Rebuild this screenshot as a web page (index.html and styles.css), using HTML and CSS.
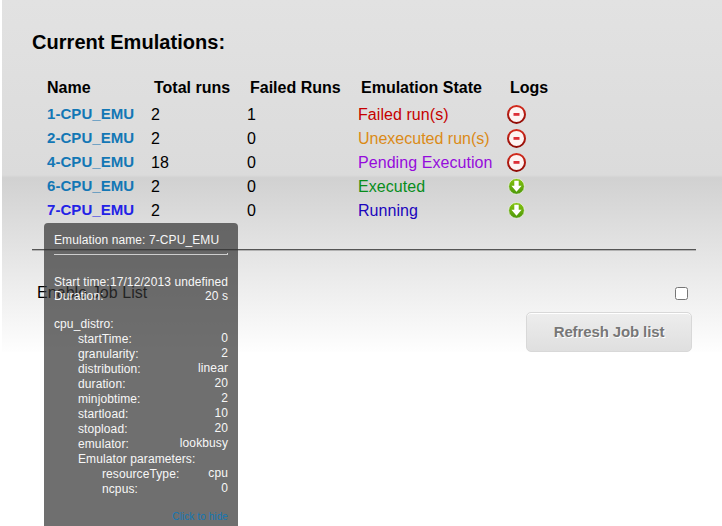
FILE: index.html
```
<!DOCTYPE html>
<html lang="en">
<head>
<meta charset="utf-8">
<title>Emulations</title>
<link rel="stylesheet" href="styles.css">
</head>
<body>
<svg class="defs" width="0" height="0" aria-hidden="true">
  <defs>
    <linearGradient id="red" x1="0" y1="0" x2="0" y2="1"><stop offset="0" stop-color="#d32a1c"/><stop offset="1" stop-color="#900b05"/></linearGradient>
    <linearGradient id="green" x1="0" y1="0" x2="0" y2="1"><stop offset="0" stop-color="#86c40f"/><stop offset="1" stop-color="#4c970a"/></linearGradient>
    <symbol id="minus" viewBox="0 0 20 20"><circle cx="10.5" cy="10.4" r="8.5" fill="#fdf4f3" stroke="url(#red)" stroke-width="2"/><path d="M7.5 9h6v2.8h-6z" fill="#dc2f37"/></symbol>
    <symbol id="down" viewBox="0 0 20 20"><circle cx="10.5" cy="10.4" r="7.9" fill="url(#green)" stroke="#edf2e8" stroke-width="0.8"/><path d="M8.3 4.8h4.4v5h2.9l-5.1 6-5.1-6h2.9z" fill="#fff"/></symbol>
  </defs>
</svg>
<main class="page">
  <h1 class="title">Current Emulations:</h1>
  <div class="table">
    <div class="row head"><span>Name</span><span>Total runs</span><span>Failed Runs</span><span>Emulation State</span><span>Logs</span></div>
    <div class="row"><a class="name">1-CPU_EMU</a><span>2</span><span>1</span><span class="failed">Failed run(s)</span><svg class="icon"><use href="#minus"/></svg></div>
    <div class="row"><a class="name">2-CPU_EMU</a><span>2</span><span>0</span><span class="unexecuted">Unexecuted run(s)</span><svg class="icon"><use href="#minus"/></svg></div>
    <div class="row"><a class="name">4-CPU_EMU</a><span>18</span><span>0</span><span class="pending">Pending Execution</span><svg class="icon"><use href="#minus"/></svg></div>
    <div class="row"><a class="name">6-CPU_EMU</a><span>2</span><span>0</span><span class="executed">Executed</span><svg class="icon"><use href="#down"/></svg></div>
    <div class="row"><a class="name active">7-CPU_EMU</a><span>2</span><span>0</span><span class="running">Running</span><svg class="icon"><use href="#down"/></svg></div>
  </div>
  <div class="rule"></div>
  <label class="enable"><span>Enable Job List</span><input class="check" type="checkbox"></label>
  <button class="refresh" type="button">Refresh Job list</button>
</main>
<aside class="popup">
  <div class="popup-title">Emulation name: 7-CPU_EMU</div>
  <div class="popup-rule"></div>
  <div class="line"><span>Start time:</span><span>17/12/2013 undefined</span></div>
  <div class="line"><span>Duration:</span><span>20 s</span></div>
  <div class="distro">cpu_distro:</div>
  <div class="param"><span>startTime:</span><b>0</b></div>
  <div class="param"><span>granularity:</span><b>2</b></div>
  <div class="param"><span>distribution:</span><b>linear</b></div>
  <div class="param"><span>duration:</span><b>20</b></div>
  <div class="param"><span>minjobtime:</span><b>2</b></div>
  <div class="param"><span>startload:</span><b>10</b></div>
  <div class="param"><span>stopload:</span><b>20</b></div>
  <div class="param"><span>emulator:</span><b>lookbusy</b></div>
  <div class="param"><span>Emulator parameters:</span></div>
  <div class="param nested"><span>resourceType:</span><b>cpu</b></div>
  <div class="param nested"><span>ncpus:</span><b>0</b></div>
  <a class="hide">Click to hide</a>
</aside>
</body>
</html>
```
FILE: styles.css
```
* { box-sizing: border-box; }
body {
  margin: 0;
  height: 526px;
  overflow: hidden;
  background: #fff;
  color: #000;
  font: 16px/22px "Liberation Sans", Arial, sans-serif;
}
.defs { position: absolute; }
.page {
  margin-left: 2px;
  height: 352px;
  padding: 30px 26px 0 30px;
  background: linear-gradient(#e2e2e2 0%, #dbdbdb 49.7%, #d1d1d1 50.5%, #fefefe 100%);
}
.title { margin: 0 0 22px; font-size: 20px; line-height: 24px; letter-spacing: .05px; }
.table { padding-left: 15px; }
.row {
  display: grid;
  grid-template-columns: 104px 96px 111px 149px 1fr;
  height: 24px;
  line-height: 24px;
  letter-spacing: .06px;
}
.head { height: 27px; font-weight: bold; letter-spacing: 0; }
.head span + span { padding-left: 3px; }
.name { margin-top: -1px; color: #1377b5; font-size: 15px; font-weight: bold; }
.active { color: #2323e6; }
.icon { width: 20px; height: 20px; margin: 1px 0 0 -1px; }
.failed { color: #c60000; }
.unexecuted { color: #db8a16; letter-spacing: 0; }
.pending { color: #950bdc; }
.executed { color: #078d1b; }
.running { color: #1b05bd; }
.rule { height: 2px; margin-top: 26px; border-top: 1px solid #555; border-bottom: 1px solid #b2b2b2; }
.enable {
  display: flex;
  justify-content: space-between;
  align-items: center;
  height: 22px;
  margin: 31px 8px 0 5px;
  letter-spacing: .06px;
}
.check { width: 13px; height: 13px; margin: 0; }
.refresh {
  display: block;
  width: 166px;
  height: 40px;
  margin: 8px 4px 0 auto;
  padding: 0 0 2px;
  border: 1px solid #d8d8d8;
  border-radius: 5px;
  background: linear-gradient(#ededed, #dfdfdf);
  box-shadow: inset 0 1px 0 #fff;
  color: #777;
  font: bold 15px "Liberation Sans", Arial, sans-serif;
  letter-spacing: -.12px;
  text-shadow: 1px 1px 0 #fff;
}
.popup {
  position: absolute;
  left: 44px;
  top: 223px;
  width: 194px;
  height: 310px;
  padding: 10px 10px 0;
  border-radius: 4px 4px 0 0;
  background: rgba(50, 50, 50, .7);
  color: #f7f7f7;
  font-size: 12px;
  line-height: 14px;
  letter-spacing: .1px;
}
.popup-rule { height: 2px; margin: 6px 0 20px; border: solid #cecece; border-width: 0 1px 1px 0; }
.line, .param { display: flex; justify-content: space-between; white-space: nowrap; }
.distro { margin-top: 14px; height: 15px; }
.param { height: 15px; line-height: 15px; padding-left: 24px; }
.param b { font-weight: normal; margin-top: -1px; }
.nested { padding-left: 48px; }
.hide { display: block; margin-top: 13px; text-align: right; font-size: 10px; color: #1377b5; }
```
